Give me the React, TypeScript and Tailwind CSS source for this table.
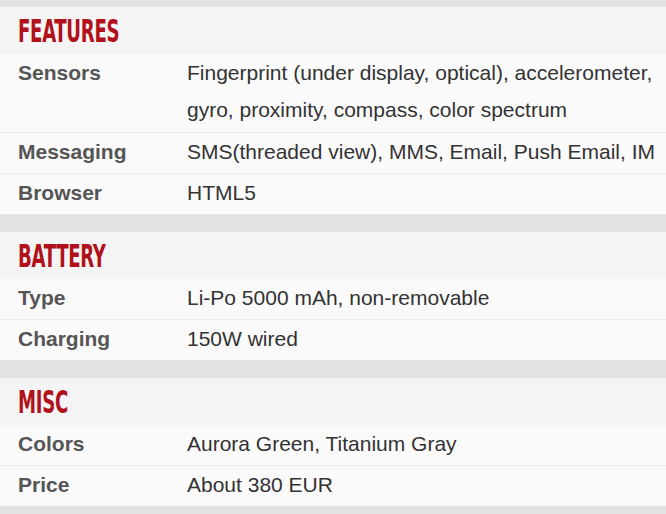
import React from "react";

type Row = { label: string; value: string[] };
type Section = { title: string; rows: Row[] };

const sections: Section[] = [
  {
    title: "FEATURES",
    rows: [
      {
        label: "Sensors",
        value: [
          "Fingerprint (under display, optical), accelerometer,",
          "gyro, proximity, compass, color spectrum",
        ],
      },
      { label: "Messaging", value: ["SMS(threaded view), MMS, Email, Push Email, IM"] },
      { label: "Browser", value: ["HTML5"] },
    ],
  },
  {
    title: "BATTERY",
    rows: [
      { label: "Type", value: ["Li-Po 5000 mAh, non-removable"] },
      { label: "Charging", value: ["150W wired"] },
    ],
  },
  {
    title: "MISC",
    rows: [
      { label: "Colors", value: ["Aurora Green, Titanium Gray"] },
      { label: "Price", value: ["About 380 EUR"] },
    ],
  },
];

export default function App() {
  return (
    <div
      className="w-[666px] h-[514px] overflow-hidden bg-[#e2e2e2] pt-[7px]"
      style={{ fontFamily: '"Liberation Sans", Arial, sans-serif' }}
    >
      {sections.map((s, si) => (
        <div key={s.title} className={si < sections.length - 1 ? "mb-[18px]" : ""}>
          <div className="h-[47px] bg-[#f4f4f4] pl-[18px] flex items-center">
            <span
              className="inline-block origin-left text-[#b0111a] font-bold text-[32px] leading-none scale-x-[0.63] tracking-[-0.5px]"
              style={{ fontFamily: '"DejaVu Sans Condensed", "DejaVu Sans", sans-serif' }}
            >
              {s.title}
            </span>
          </div>
          {s.rows.map((r, ri) => (
            <div
              key={r.label}
              className={`flex bg-[#fafafa] ${r.value.length > 1 ? "pb-[4px]" : "pb-[3px]"} ${ri < s.rows.length - 1 ? "border-b border-[#ebebeb]" : ""}`}
            >
              <div className="w-[187px] shrink-0 pl-[18px] text-[21px] leading-[37px] font-bold text-[#555555]">
                {r.label}
              </div>
              <div className="text-[21px] leading-[37px] text-[#333333]">
                {r.value.map((v) => (
                  <div key={v}>{v}</div>
                ))}
              </div>
            </div>
          ))}
        </div>
      ))}
    </div>
  );
}
